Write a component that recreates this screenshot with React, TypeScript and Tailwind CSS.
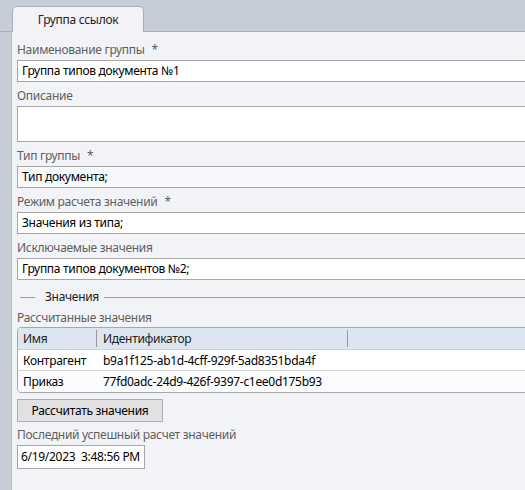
import React from "react";

function Label({ text, req }: { text: string; req?: boolean }) {
  return (
    <div className="h-[16px] leading-[16px] text-[#5f5f5f] whitespace-nowrap">
      {text}
      {req && <span className="ml-[7px]">*</span>}
    </div>
  );
}

function Field({
  label,
  value,
  req,
  tall,
  bg = "bg-white",
}: {
  label: string;
  value?: string;
  req?: boolean;
  tall?: boolean;
  bg?: string;
}) {
  return (
    <div className="mb-[6px]">
      <Label text={label} req={req} />
      <div
        className={`mt-[2px] w-[620px] border border-[#a7a7a7] ${bg} pl-[4px] text-black whitespace-nowrap ${
          tall ? "h-[36px]" : "h-[22px] leading-[20px]"
        }`}
      >
        {value}
      </div>
    </div>
  );
}

export default function App() {
  return (
    <div className="w-[525px] h-[490px] overflow-hidden bg-[#c6cdd7] flex flex-col font-['Noto_Sans',sans-serif] text-[12px] tracking-[-0.3px]">
      <div className="h-[32px] shrink-0 border-b border-[#a9afb7] flex items-end pl-[12px]">
        <div className="relative z-10 mb-[-1px] h-[26px] w-[132px] rounded-t-[5px] border border-b-0 border-[#a9afb7] bg-[#f2f3f7] flex items-center justify-center text-[#222]">
          Группа ссылок
        </div>
      </div>
      <div className="flex-1 ml-[11px] border-l border-[#b9bec6] bg-[#f2f3f7] pl-[5px] pt-[10px] overflow-hidden">
        <Field label="Наименование группы" req value="Группа типов документа №1" />
        <Field label="Описание" tall />
        <Field label="Тип группы" req value="Тип документа;" bg="bg-[#f7f8fa]" />
        <Field label="Режим расчета значений" req value="Значения из типа;" />
        <Field label="Исключаемые значения" value="Группа типов документов №2;" />

        <div className="mt-[9px] h-[16px] flex items-center">
          <div className="ml-[3px] w-[15px] h-px bg-[#9d9d9d]" />
          <div className="ml-[10px] mr-[5px] leading-[16px] text-[#222]">Значения</div>
          <div className="flex-1 h-px bg-[#9d9d9d]" />
        </div>

        <div className="mt-[5px]">
          <Label text="Рассчитанные значения" />
        </div>

        <div className="mt-[1px] w-[620px] border border-[#a8a8a8] rounded-[4px] overflow-hidden bg-white text-black">
          <div className="h-[22px] bg-[#dce6f0] border-b border-[#c9d2db] flex items-stretch text-[#222]">
            <div className="w-[78px] pl-[5px] leading-[22px]">Имя</div>
            <div className="w-px my-[2px] bg-[#9a9a9a]" />
            <div className="w-[250px] pl-[6px] leading-[22px]">Идентификатор</div>
            <div className="w-px my-[2px] bg-[#9a9a9a]" />
          </div>
          <div className="h-[21px] border-b border-[#d6d6d6] flex">
            <div className="w-[79px] pl-[5px] leading-[21px]">Контрагент</div>
            <div className="pl-[6px] leading-[21px]">b9a1f125-ab1d-4cff-929f-5ad8351bda4f</div>
          </div>
          <div className="h-[21px] flex bg-[#fafbfc]">
            <div className="w-[79px] pl-[5px] leading-[21px]">Приказ</div>
            <div className="pl-[6px] leading-[21px]">77fd0adc-24d9-426f-9397-c1ee0d175b93</div>
          </div>
        </div>

        <div className="mt-[6px] w-[146px] h-[23px] border border-[#adadad] bg-[#e1e1e1] flex items-center justify-center text-black">
          Рассчитать значения
        </div>

        <div className="mt-[5px]">
          <Label text="Последний успешный расчет значений" />
        </div>
        <div className="mt-[2px] w-[128px] h-[24px] border border-[#a7a7a7] bg-white pl-[3px] leading-[22px] text-black whitespace-pre">
          6/19/2023  3:48:56 PM
        </div>
      </div>
    </div>
  );
}
